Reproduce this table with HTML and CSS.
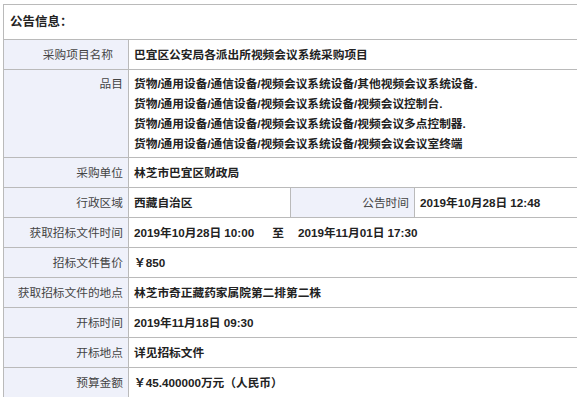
FILE: index.html
```html
<!DOCTYPE html>
<html lang="zh-CN">
<head>
<meta charset="utf-8">
<title>公告信息</title>
<link rel="stylesheet" href="styles.css">
</head>
<body>
<table class="info">
  <colgroup>
    <col class="c-label">
    <col class="c-value">
    <col class="c-label2">
    <col class="c-value2">
  </colgroup>
  <tr class="head-row">
    <td class="head" colspan="4">公告信息：</td>
  </tr>
  <tr>
    <td class="label label-wide">采购项目名称</td>
    <td class="value" colspan="3">巴宜区公安局各派出所视频会议系统采购项目</td>
  </tr>
  <tr class="multi">
    <td class="label label-top">品目</td>
    <td class="value" colspan="3">货物/通用设备/通信设备/视频会议系统设备/其他视频会议系统设备.<br>货物/通用设备/通信设备/视频会议系统设备/视频会议控制台.<br>货物/通用设备/通信设备/视频会议系统设备/视频会议多点控制器.<br>货物/通用设备/通信设备/视频会议系统设备/视频会议会议室终端</td>
  </tr>
  <tr>
    <td class="label">采购单位</td>
    <td class="value" colspan="3">林芝市巴宜区财政局</td>
  </tr>
  <tr>
    <td class="label">行政区域</td>
    <td class="value">西藏自治区</td>
    <td class="label">公告时间</td>
    <td class="value">2019年10月28日 12:48</td>
  </tr>
  <tr>
    <td class="label">获取招标文件时间</td>
    <td class="value" colspan="3"><span class="num">2019年10月28日 10:00</span><span class="gap"></span>至<span class="gap gap-2"></span><span class="num">2019年11月01日 17:30</span></td>
  </tr>
  <tr>
    <td class="label">招标文件售价</td>
    <td class="value" colspan="3">￥850</td>
  </tr>
  <tr>
    <td class="label">获取招标文件的地点</td>
    <td class="value" colspan="3">林芝市奇正藏药家属院第二排第二株</td>
  </tr>
  <tr>
    <td class="label">开标时间</td>
    <td class="value" colspan="3">2019年11月18日 09:30</td>
  </tr>
  <tr>
    <td class="label">开标地点</td>
    <td class="value" colspan="3">详见招标文件</td>
  </tr>
  <tr>
    <td class="label">预算金额</td>
    <td class="value" colspan="3">￥45.400000万元（人民币）</td>
  </tr>
</table>
</body>
</html>
```
FILE: styles.css
```css
html, body {
  background: #ffffff;
}
body {
  margin: 4px 3px 0 3px;
  font-family: "Liberation Sans", "Noto Sans CJK SC", sans-serif;
  font-size: 11.7px;
  color: #333333;
}
.info {
  width: 574px;
  border-collapse: collapse;
  table-layout: fixed;
}
.c-label { width: 125px; }
.c-value { width: 162px; }
.c-label2 { width: 124px; }
.c-value2 { width: 163px; }
.info td {
  border: 1px solid #bababa;
  line-height: 20px;
  padding: 5px 5px 4px 5px;
  vertical-align: middle;
  white-space: nowrap;
}
.head-row td.head {
  padding: 7px 6px 7px 6px;
  font-weight: bold;
  font-size: 12.5px;
  color: #222222;
  background: #ffffff;
}
.info td.label {
  background: #eff1fa;
  text-align: right;
  color: #444444;
  padding-right: 5px;
}
.info td.label-wide {
  padding-right: 15px;
}
.info td.value {
  font-weight: bold;
  color: #222222;
  text-align: left;
  padding-left: 5px;
}
.multi td {
  padding-top: 4px;
  padding-bottom: 3px;
}
.info td.label-top {
  vertical-align: top;
}
.gap {
  display: inline-block;
  width: 18px;
}
.gap-2 {
  width: 14px;
}
```
